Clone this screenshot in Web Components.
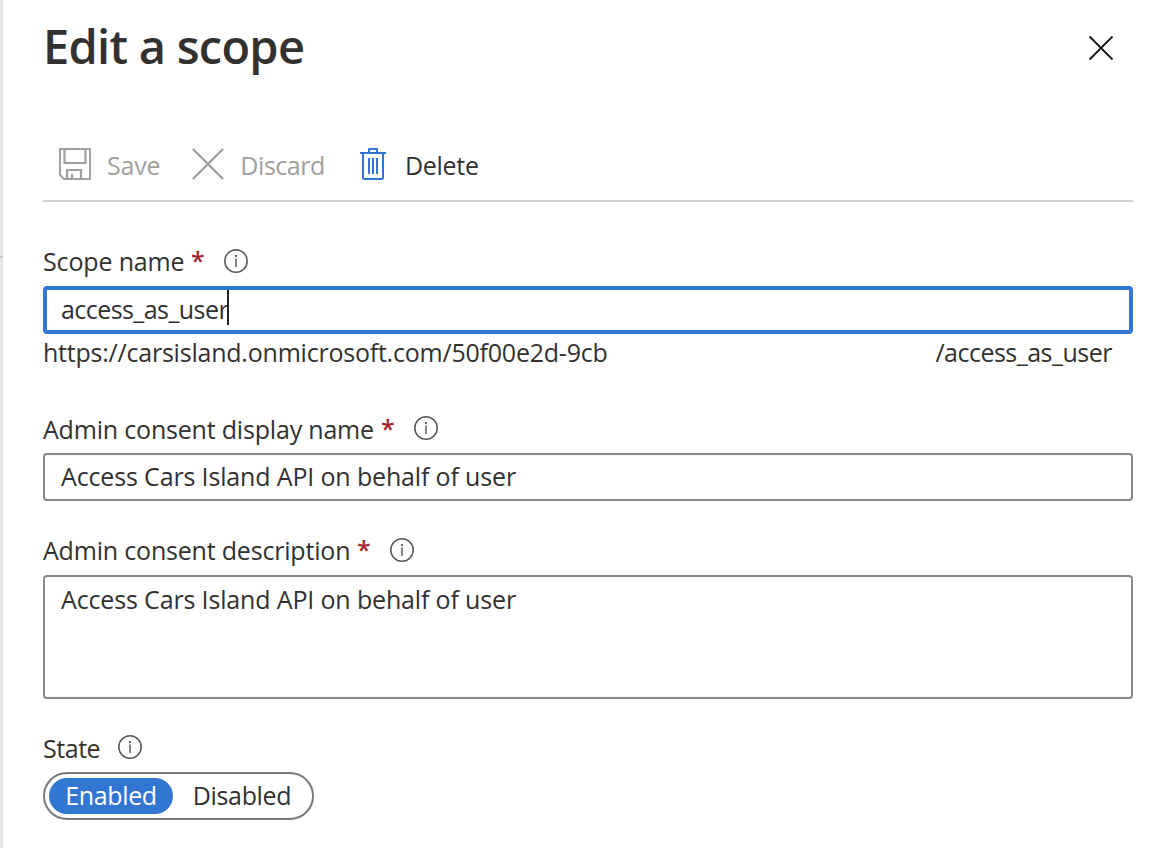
<!DOCTYPE html>
<html lang="en">
<head>
<meta charset="utf-8">
<title>Edit a scope</title>
<style>
html,body{margin:0;height:100%;overflow:hidden;background:#fff}
body{font-family:"Open Sans","Noto Sans",sans-serif;color:#323130}
</style>
</head>
<body>
<scope-panel></scope-panel>
<script>
const define = (name, html) => customElements.define(name, class extends HTMLElement {
  constructor() {
    super();
    const t = document.createElement('template');
    t.innerHTML = html;
    this.attachShadow({mode: 'open'}).append(t.content.cloneNode(true));
  }
});

define('close-icon', `<style>:host{display:block;width:26px;height:26px}svg{display:block}</style>
<svg width="26" height="26" viewBox="0 0 26 26" fill="none" stroke="#111" stroke-width="1.8"><path d="M1.5 1.5l23 23M24.5 1.5l-23 23"/></svg>`);

define('save-icon', `<style>:host{display:block;width:32px;height:32px}svg{display:block}</style>
<svg width="32" height="32" viewBox="0 0 32 32" fill="none" stroke="#a19f9d" stroke-width="2"><path d="M1 1H31V31H5L1 27Z"/><path d="M5.5 1V15H26.5V1" stroke-width="2.2"/><path d="M8 31V22H22V31M13 31V26" stroke-width="2.2"/></svg>`);

define('discard-icon', `<style>:host{display:block;width:32px;height:32px}svg{display:block}</style>
<svg width="32" height="32" viewBox="0 0 32 32" fill="none" stroke="#a19f9d" stroke-width="2.3"><path d="M1 1l30 30M31 1l-30 30"/></svg>`);

define('delete-icon', `<style>:host{display:block;width:26px;height:32px}svg{display:block}</style>
<svg width="26" height="32" viewBox="0 0 26 32" fill="none" stroke="#3276d1" stroke-width="2"><path d="M0 5H26"/><path d="M9 5V1H17V5" stroke-linejoin="round"/><path d="M3 5V29.5Q3 31 4.5 31H21.5Q23 31 23 29.5V5"/><path d="M9 10V26M13 10V26M17 10V26"/></svg>`);

define('info-icon', `<style>:host{display:block;width:24px;height:24px}svg{display:block}</style>
<svg width="24" height="24" viewBox="0 0 24 24"><circle cx="12" cy="12" r="11.2" fill="none" stroke="#555" stroke-width="1.5"/><rect x="11.2" y="9.5" width="1.6" height="8.5" fill="#666"/><rect x="11" y="6" width="2" height="2" fill="#666"/></svg>`);

define('tool-button', `<style>
:host{display:flex;align-items:center;height:32px;font-size:25px;line-height:34px;color:#323130;white-space:nowrap}
:host([disabled]){color:#a19f9d}
.label{margin-left:var(--gap,16px);letter-spacing:var(--ls,0);padding-top:1px}
</style><slot name="icon"></slot><span class="label"><slot></slot></span>`);

define('field-label', `<style>
:host{display:flex;height:34px;align-items:center;font-size:25px;line-height:34px;white-space:nowrap}
.t{letter-spacing:var(--ls,0);width:var(--w);padding-top:var(--drop,0)}
.star{display:none;width:12px;margin:-2px 21px 0 8px;color:#a4262c;font-weight:600;padding-top:var(--drop,0)}
:host([required]) .star{display:block}
</style><span class="t"><slot></slot></span><span class="star">*</span><info-icon></info-icon>`);

define('text-box', `<style>
:host{display:flex;box-sizing:border-box;height:48px;border:2px solid #8a8886;border-radius:4px;padding:4px 16px;font-size:25px;line-height:34px;white-space:nowrap}
:host([focused]){border:4px solid #3276d1;padding:2px 14px}
:host([multiline]){height:124px;padding-top:5px}
.m{letter-spacing:var(--ls,-.15px)}
.caret{display:none;width:2px;height:35px;margin-left:-1px;margin-top:-2px;background:#222}
:host([focused]) .caret{display:block}
</style><span class="m"><slot></slot></span><span class="caret"></span>`);

define('state-toggle', `<style>
:host{display:flex;box-sizing:border-box;width:271px;height:48px;border:2px solid #7b7977;border-radius:24px;padding:4px;font-size:25px;line-height:34px}
span{width:124px;text-align:center;border-radius:18px;height:36px;letter-spacing:-.35px}
.on{background:#3276d1;color:#fff}
.off{margin-left:7px}
</style><span class="on">Enabled</span><span class="off">Disabled</span>`);

define('scope-panel', `<style>
:host{display:flex;height:848px;width:1173px}
.edge{width:3px;background:linear-gradient(90deg,#e8e8e8,#e2e2e2);flex:none}
.edge i{display:block;height:2px;margin-top:256px;background:#c8c8c8}
main{flex:1;background:#fff;padding:0 40px;display:flex;flex-direction:column}
header{height:148px;display:flex;justify-content:space-between}
h1{margin:14px 0 0;font-size:47px;line-height:64px;font-weight:600;height:64px;letter-spacing:-.74px}
close-icon{margin:35px 19px 0 0}
nav{display:flex;height:52px;padding-left:16px;border-bottom:2px solid #d2d0ce;margin-bottom:42px}
text-box{margin-top:8px}
.url{display:flex;height:34px;margin-top:1px;margin-bottom:1px;font-size:25px;line-height:34px;white-space:nowrap;letter-spacing:-.22px}
.url span+span{margin-left:auto;margin-right:21px;letter-spacing:-.5px}
state-toggle{margin-top:8px}
</style>
<div class="edge"><i></i></div>
<main>
<header><h1>Edit a scope</h1><close-icon></close-icon></header>
<nav>
<tool-button disabled style="--ls:-.2px"><save-icon slot="icon"></save-icon>Save</tool-button>
<tool-button disabled style="margin-left:32px;--ls:-.45px"><discard-icon slot="icon"></discard-icon>Discard</tool-button>
<tool-button style="margin-left:35px;--gap:19px;--ls:-.3px"><delete-icon slot="icon"></delete-icon>Delete</tool-button>
</nav>
<field-label required style="--w:140px;--ls:-.15px">Scope name</field-label>
<text-box focused style="--ls:-.56px">access_as_user</text-box>
<div class="url"><span>https://carsisland.onmicrosoft.com/50f00e2d-9cb</span><span>/access_as_user</span></div>
<field-label required style="margin-top:41px;--w:330px;--ls:-.19px;--drop:2px">Admin consent display name</field-label>
<text-box>Access Cars Island API on behalf of user</text-box>
<field-label required style="margin-top:32px;--w:306px;--ls:-.19px">Admin consent description</field-label>
<text-box multiline>Access Cars Island API on behalf of user</text-box>
<field-label style="margin-top:31px;--w:75px;--ls:-.45px;--drop:2px">State</field-label>
<state-toggle></state-toggle>
</main>`);
</script>
</body>
</html>
